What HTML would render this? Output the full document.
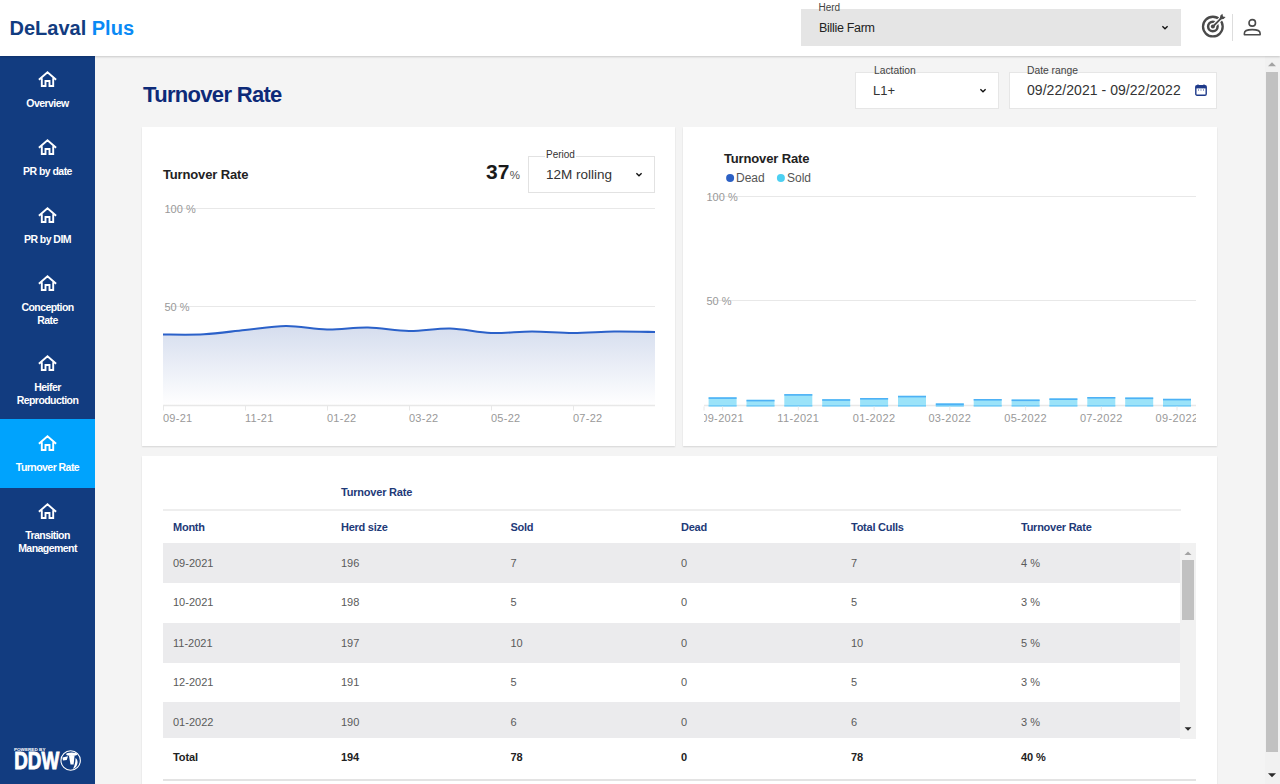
<!DOCTYPE html>
<html><head><meta charset="utf-8">
<style>
*{box-sizing:border-box;margin:0;padding:0}
html,body{width:1280px;height:784px;overflow:hidden;background:#f4f4f4;font-family:"Liberation Sans",sans-serif}
.abs{position:absolute}
#hdr{left:0;top:0;width:1280px;height:56px;background:#fff;box-shadow:0 1px 2px rgba(0,0,0,.18);z-index:5}
#logo{left:9.5px;top:16.6px;font-size:20px;font-weight:bold;color:#123c80;letter-spacing:0;white-space:nowrap}
#logo span{color:#0a8af5}
#side{left:0;top:56px;width:95px;height:728px;background:#123c80}
.it{position:absolute;left:0;width:95px;color:#fff;text-align:center;font-size:10.5px;font-weight:bold;line-height:12.2px}
.it svg{position:absolute;left:38px;top:15px}
.it .t{position:absolute;left:0;width:95px;top:41.3px;letter-spacing:-0.55px}
.act{background:#00a3fd}
.card{position:absolute;background:#fff;box-shadow:0 1px 1.5px rgba(0,0,0,0.13)}
.lbl{position:absolute;font-size:10px;color:#333;background:transparent;white-space:nowrap}
.txt{position:absolute;white-space:nowrap}
</style></head><body>
<div id="hdr" class="abs">
  <div id="logo" class="abs">DeLaval <span>Plus</span></div>
  <div class="abs" style="left:801px;top:9px;width:380px;height:37px;background:#e5e5e5"></div>
  <div class="lbl" style="left:818.5px;top:2px;font-size:10px;color:#444">Herd</div>
  <div class="txt" style="left:819px;top:21px;font-size:12.5px;color:#222;letter-spacing:-0.3px">Billie Farm</div>
  <svg class="abs" style="left:1160px;top:24px" width="10" height="7" viewBox="0 0 10 7"><path d="M2.4 2.2 L5 4.7 L7.6 2.2" stroke="#111" stroke-width="1.35" fill="none"/></svg>
  <svg class="abs" style="left:1200px;top:12px" width="27" height="27" viewBox="0 0 27 27">
    <circle cx="12.85" cy="14.6" r="9.85" stroke="#4a4a4a" stroke-width="2.3" fill="none"/>
    <circle cx="12.85" cy="14.6" r="4.75" stroke="#4a4a4a" stroke-width="2.5" fill="none"/>
    <path d="M12.85 14.6 L22 5.4" stroke="#fff" stroke-width="4.2" fill="none"/>
    <circle cx="12.85" cy="14.6" r="2" fill="#4a4a4a"/>
    <path d="M12.85 14.6 L21.5 5.9" stroke="#4a4a4a" stroke-width="1.9" fill="none"/>
    <path d="M19.6 7.4 L20.4 3.6 L22.4 1.7 L23 4.4 L25.6 4.9 L23.6 6.9 Z" fill="#4a4a4a"/>
  </svg>
  <div class="abs" style="left:1232px;top:14px;width:1px;height:27px;background:#ddd"></div>
  <svg class="abs" style="left:1242px;top:18px" width="20" height="19" viewBox="0 0 20 19">
    <circle cx="10.25" cy="4.9" r="3.25" stroke="#4a4a4a" stroke-width="1.6" fill="none"/>
    <path d="M2.4 16.7 V15.2 C2.4 12.6 6 11.6 10.25 11.6 C14.5 11.6 18.1 12.6 18.1 15.2 V16.7 Z" stroke="#4a4a4a" stroke-width="1.6" fill="none" stroke-linejoin="round"/>
  </svg>
</div>

<div id="side" class="abs">
  <div class="it" style="top:0;height:68px"><svg width="19" height="17" viewBox="0 0 19 17"><path d="M0.9 8.8 L9.5 1.3 L18.1 8.8 M3.8 7.3 V15 H7.5 V10 H11.5 V15 H15.2 V7.3" stroke="#fff" stroke-width="1.9" fill="none"/></svg><div class="t">Overview</div></div>
  <div class="it" style="top:68px;height:68px"><svg width="19" height="17" viewBox="0 0 19 17"><path d="M0.9 8.8 L9.5 1.3 L18.1 8.8 M3.8 7.3 V15 H7.5 V10 H11.5 V15 H15.2 V7.3" stroke="#fff" stroke-width="1.9" fill="none"/></svg><div class="t">PR by date</div></div>
  <div class="it" style="top:136px;height:68px"><svg width="19" height="17" viewBox="0 0 19 17"><path d="M0.9 8.8 L9.5 1.3 L18.1 8.8 M3.8 7.3 V15 H7.5 V10 H11.5 V15 H15.2 V7.3" stroke="#fff" stroke-width="1.9" fill="none"/></svg><div class="t">PR by DIM</div></div>
  <div class="it" style="top:204px;height:80px"><svg width="19" height="17" viewBox="0 0 19 17"><path d="M0.9 8.8 L9.5 1.3 L18.1 8.8 M3.8 7.3 V15 H7.5 V10 H11.5 V15 H15.2 V7.3" stroke="#fff" stroke-width="1.9" fill="none"/></svg><div class="t">Conception<br>Rate</div></div>
  <div class="it" style="top:284px;height:80px"><svg width="19" height="17" viewBox="0 0 19 17"><path d="M0.9 8.8 L9.5 1.3 L18.1 8.8 M3.8 7.3 V15 H7.5 V10 H11.5 V15 H15.2 V7.3" stroke="#fff" stroke-width="1.9" fill="none"/></svg><div class="t">Heifer<br>Reproduction</div></div>
  <div class="it act" style="top:363px;height:69px"><svg width="19" height="17" viewBox="0 0 19 17" style="top:16px"><path d="M0.9 8.8 L9.5 1.3 L18.1 8.8 M3.8 7.3 V15 H7.5 V10 H11.5 V15 H15.2 V7.3" stroke="#fff" stroke-width="1.9" fill="none"/></svg><div class="t" style="top:42.3px">Turnover Rate</div></div>
  <div class="it" style="top:432px;height:80px"><svg width="19" height="17" viewBox="0 0 19 17"><path d="M0.9 8.8 L9.5 1.3 L18.1 8.8 M3.8 7.3 V15 H7.5 V10 H11.5 V15 H15.2 V7.3" stroke="#fff" stroke-width="1.9" fill="none"/></svg><div class="t">Transition<br>Management</div></div>
  <svg style="position:absolute;left:0;top:684px" width="95" height="44" viewBox="0 740 95 44">
    <text x="13.9" y="751" font-family="Liberation Sans" font-weight="bold" font-size="4.2" fill="#fff" textLength="31.6" lengthAdjust="spacingAndGlyphs">POWERED BY</text>
    <text x="14.2" y="768.7" font-family="Liberation Sans" font-weight="bold" font-size="24.3" fill="#fff" stroke="#fff" stroke-width="0.9" textLength="45" lengthAdjust="spacingAndGlyphs">DDW</text>
    <circle cx="70.65" cy="760.5" r="9.7" fill="none" stroke="#fff" stroke-width="1.1"/>
    <ellipse cx="71.75" cy="754.3" rx="5.6" ry="1.7" fill="#fff"/>
    <path d="M62.4 757.5 L68 756.25 L66.75 760 L63 760.6 Z" fill="#fff"/>
    <path d="M68.9 755.4 L74.6 755.4 L73.6 764.4 L70.5 764.4 Z" fill="#fff"/>
    <path d="M75.5 758.1 C77.8 759.5 78.2 763 76.6 766 C75.7 767.6 74.5 768.4 73 768.75 C74.6 766 75.6 762 75.5 758.1 Z" fill="#fff"/>
  </svg>
</div>

<!-- page title -->
<div class="txt" style="left:143px;top:82px;font-size:22px;font-weight:bold;color:#0d2a78;letter-spacing:-0.68px">Turnover Rate</div>

<!-- lactation -->
<div class="abs" style="left:855px;top:72px;width:144px;height:37px;background:#fff;border:1px solid #e6e6e6"></div>
<div class="lbl" style="left:874px;top:64.5px;color:#444;font-size:10.3px">Lactation</div>
<div class="txt" style="left:873px;top:83px;font-size:13px;color:#333">L1+</div>
<svg class="abs" style="left:978px;top:87px" width="10" height="7" viewBox="0 0 10 7"><path d="M2.4 2.2 L5 4.7 L7.6 2.2" stroke="#111" stroke-width="1.35" fill="none"/></svg>
<!-- date range -->
<div class="abs" style="left:1009px;top:72px;width:208px;height:37px;background:#fff;border:1px solid #e6e6e6"></div>
<div class="lbl" style="left:1027px;top:64.5px;color:#444;font-size:10.3px">Date range</div>
<div class="txt" style="left:1027px;top:82px;font-size:14px;color:#333;letter-spacing:0.05px">09/22/2021 - 09/22/2022</div>
<svg class="abs" style="left:1195px;top:84px" width="12" height="12" viewBox="0 0 12 12"><path d="M3 0.5 V2.5 M9 0.5 V2.5" stroke="#1e3a8a" stroke-width="1.4"/><rect x="0.8" y="1.8" width="10.4" height="9.4" rx="1.2" fill="none" stroke="#1e3a8a" stroke-width="1.4"/><rect x="0.8" y="1.8" width="10.4" height="2.6" fill="#1e3a8a"/><path d="M3 6 h1 M5.5 6 h1 M8 6 h1" stroke="#1e3a8a" stroke-width="0.9"/></svg>

<!-- page scrollbar -->
<div class="abs" style="left:1265px;top:56px;width:15px;height:728px;background:#f1f1f1"></div>
<div class="abs" style="left:1266px;top:72px;width:12px;height:680px;background:#c1c1c1"></div>

<!-- card 1 -->
<div class="card" style="left:142px;top:127px;width:533px;height:319px"></div>
<!-- card 2 -->
<div class="card" style="left:683px;top:127px;width:534px;height:319px"></div>
<!-- table card -->
<div class="card" style="left:142px;top:455.5px;width:1075px;height:340px"></div>

<!-- CHARTS -->
<svg class="abs" style="left:0;top:0" width="1280" height="784" viewBox="0 0 1280 784">
<defs><linearGradient id="ag" x1="0" y1="0" x2="0" y2="1"><stop offset="0" stop-color="#d5ddee"/><stop offset="1" stop-color="#ffffff"/></linearGradient></defs>
<g stroke="#e8e8e8" stroke-width="1"><line x1="168" y1="208.5" x2="655" y2="208.5"/><line x1="168" y1="306.5" x2="655" y2="306.5"/></g>
<path d="M163.0 334.5 C169.8 334.5 190.3 335.1 204.0 334.3 C217.7 333.6 231.3 331.4 245.0 330.0 C258.7 328.6 272.3 326.1 286.0 326.0 C299.7 325.9 313.3 329.2 327.0 329.5 C340.7 329.8 354.3 327.2 368.0 327.5 C381.7 327.8 395.3 330.8 409.0 331.0 C422.7 331.2 436.3 328.2 450.0 328.5 C463.7 328.8 477.3 332.5 491.0 333.0 C504.7 333.5 518.3 331.5 532.0 331.5 C545.7 331.5 559.3 333.0 573.0 333.0 C586.7 333.0 600.3 331.7 614.0 331.5 C627.7 331.3 648.2 331.9 655.0 332.0 L655 405.5 L163 405.5 Z" fill="url(#ag)"/>
<path d="M163.0 334.5 C169.8 334.5 190.3 335.1 204.0 334.3 C217.7 333.6 231.3 331.4 245.0 330.0 C258.7 328.6 272.3 326.1 286.0 326.0 C299.7 325.9 313.3 329.2 327.0 329.5 C340.7 329.8 354.3 327.2 368.0 327.5 C381.7 327.8 395.3 330.8 409.0 331.0 C422.7 331.2 436.3 328.2 450.0 328.5 C463.7 328.8 477.3 332.5 491.0 333.0 C504.7 333.5 518.3 331.5 532.0 331.5 C545.7 331.5 559.3 333.0 573.0 333.0 C586.7 333.0 600.3 331.7 614.0 331.5 C627.7 331.3 648.2 331.9 655.0 332.0" fill="none" stroke="#2b61c9" stroke-width="2.1"/>
<line x1="163" y1="405.5" x2="655" y2="405.5" stroke="#e8e8e8" stroke-width="1.5"/>
<line x1="163.5" y1="406" x2="163.5" y2="410.5" stroke="#e8e8e8"/>
<line x1="245.5" y1="406" x2="245.5" y2="410.5" stroke="#e8e8e8"/>
<line x1="327.5" y1="406" x2="327.5" y2="410.5" stroke="#e8e8e8"/>
<line x1="409.5" y1="406" x2="409.5" y2="410.5" stroke="#e8e8e8"/>
<line x1="491.5" y1="406" x2="491.5" y2="410.5" stroke="#e8e8e8"/>
<line x1="573.5" y1="406" x2="573.5" y2="410.5" stroke="#e8e8e8"/>
<g font-family="Liberation Sans" font-size="11" fill="#999"><text x="164.5" y="213">100 %</text><text x="164.5" y="311">50 %</text></g><g font-family="Liberation Sans" font-size="11" fill="#999" letter-spacing="0.25">
<text x="163" y="422">09-21</text>
<text x="245" y="422">11-21</text>
<text x="327" y="422">01-22</text>
<text x="409" y="422">03-22</text>
<text x="491" y="422">05-22</text>
<text x="573" y="422">07-22</text>
</g>
<g stroke="#e8e8e8" stroke-width="1"><line x1="709" y1="196.5" x2="1196" y2="196.5"/><line x1="709" y1="300.5" x2="1196" y2="300.5"/></g>
<line x1="704" y1="405.5" x2="1196" y2="405.5" stroke="#e8e8e8" stroke-width="1.5"/>
<rect x="708.6" y="397.3" width="28" height="9.2" fill="#9be3f9"/><rect x="708.6" y="397.3" width="28" height="1.6" fill="#4db1f5"/><rect x="708.6" y="405.2" width="28" height="1.2" fill="#6cc6f7"/>
<rect x="746.5" y="399.8" width="28" height="6.7" fill="#9be3f9"/><rect x="746.5" y="399.8" width="28" height="1.6" fill="#4db1f5"/><rect x="746.5" y="405.2" width="28" height="1.2" fill="#6cc6f7"/>
<rect x="784.3" y="394.1" width="28" height="12.4" fill="#9be3f9"/><rect x="784.3" y="394.1" width="28" height="1.6" fill="#4db1f5"/><rect x="784.3" y="405.2" width="28" height="1.2" fill="#6cc6f7"/>
<rect x="822.2" y="399.2" width="28" height="7.3" fill="#9be3f9"/><rect x="822.2" y="399.2" width="28" height="1.6" fill="#4db1f5"/><rect x="822.2" y="405.2" width="28" height="1.2" fill="#6cc6f7"/>
<rect x="860.1" y="398.0" width="28" height="8.5" fill="#9be3f9"/><rect x="860.1" y="398.0" width="28" height="1.6" fill="#4db1f5"/><rect x="860.1" y="405.2" width="28" height="1.2" fill="#6cc6f7"/>
<rect x="898.0" y="395.8" width="28" height="10.7" fill="#9be3f9"/><rect x="898.0" y="395.8" width="28" height="1.6" fill="#4db1f5"/><rect x="898.0" y="405.2" width="28" height="1.2" fill="#6cc6f7"/>
<rect x="935.8" y="403.4" width="28" height="3.1" fill="#9be3f9"/><rect x="935.8" y="403.4" width="28" height="1.6" fill="#4db1f5"/><rect x="935.8" y="405.2" width="28" height="1.2" fill="#6cc6f7"/>
<rect x="973.7" y="399.0" width="28" height="7.5" fill="#9be3f9"/><rect x="973.7" y="399.0" width="28" height="1.6" fill="#4db1f5"/><rect x="973.7" y="405.2" width="28" height="1.2" fill="#6cc6f7"/>
<rect x="1011.6" y="399.5" width="28" height="7.0" fill="#9be3f9"/><rect x="1011.6" y="399.5" width="28" height="1.6" fill="#4db1f5"/><rect x="1011.6" y="405.2" width="28" height="1.2" fill="#6cc6f7"/>
<rect x="1049.4" y="398.4" width="28" height="8.1" fill="#9be3f9"/><rect x="1049.4" y="398.4" width="28" height="1.6" fill="#4db1f5"/><rect x="1049.4" y="405.2" width="28" height="1.2" fill="#6cc6f7"/>
<rect x="1087.3" y="397.0" width="28" height="9.5" fill="#9be3f9"/><rect x="1087.3" y="397.0" width="28" height="1.6" fill="#4db1f5"/><rect x="1087.3" y="405.2" width="28" height="1.2" fill="#6cc6f7"/>
<rect x="1125.2" y="397.5" width="28" height="9.0" fill="#9be3f9"/><rect x="1125.2" y="397.5" width="28" height="1.6" fill="#4db1f5"/><rect x="1125.2" y="405.2" width="28" height="1.2" fill="#6cc6f7"/>
<rect x="1163.0" y="398.8" width="28" height="7.7" fill="#9be3f9"/><rect x="1163.0" y="398.8" width="28" height="1.6" fill="#4db1f5"/><rect x="1163.0" y="405.2" width="28" height="1.2" fill="#6cc6f7"/>
<line x1="704.0" y1="406.5" x2="704.0" y2="410.5" stroke="#e8e8e8"/>
<line x1="722.6" y1="406.5" x2="722.6" y2="410.5" stroke="#e8e8e8"/>
<line x1="798.3" y1="406.5" x2="798.3" y2="410.5" stroke="#e8e8e8"/>
<line x1="874.1" y1="406.5" x2="874.1" y2="410.5" stroke="#e8e8e8"/>
<line x1="949.8" y1="406.5" x2="949.8" y2="410.5" stroke="#e8e8e8"/>
<line x1="1025.6" y1="406.5" x2="1025.6" y2="410.5" stroke="#e8e8e8"/>
<line x1="1101.3" y1="406.5" x2="1101.3" y2="410.5" stroke="#e8e8e8"/>
<line x1="1177.0" y1="406.5" x2="1177.0" y2="410.5" stroke="#e8e8e8"/>
<g font-family="Liberation Sans" font-size="11" fill="#999"><text x="706.5" y="304.5">50 %</text><text x="706.5" y="200.5">100 %</text>
<svg x="704" y="405" width="492" height="25" overflow="hidden"><g letter-spacing="0.35">
<text x="18.6" y="17" text-anchor="middle">09-2021</text>
<text x="94.3" y="17" text-anchor="middle">11-2021</text>
<text x="170.1" y="17" text-anchor="middle">01-2022</text>
<text x="245.8" y="17" text-anchor="middle">03-2022</text>
<text x="321.6" y="17" text-anchor="middle">05-2022</text>
<text x="397.3" y="17" text-anchor="middle">07-2022</text>
<text x="473.0" y="17" text-anchor="middle">09-2022</text>
</g></svg></g>
<circle cx="730.1" cy="178" r="4" fill="#2c60c4"/><circle cx="780.9" cy="178" r="4" fill="#4dd0f2"/>
<path d="M1268 66.2 L1272 62.2 L1276 66.2 Z" fill="#a3a3a3"/><path d="M1268 773.3 L1272 777.3 L1276 773.3 Z" fill="#2a2a2a"/>
</svg>
<div class="txt" style="left:163px;top:167px;font-size:13px;font-weight:bold;color:#222;letter-spacing:-0.15px">Turnover Rate</div>
<div class="txt" style="left:486px;top:160px;font-size:21px;font-weight:bold;color:#1a1a1a">37<span style="font-size:11.5px;font-weight:normal;color:#555;margin-left:0.5px">%</span></div>
<div class="abs" style="left:528px;top:156px;width:127px;height:37px;border:1px solid #e2e2e2;background:#fff"></div>
<div class="lbl" style="left:545px;top:149px;background:#fff;padding:0 1px;color:#333">Period</div>
<div class="txt" style="left:546px;top:167px;font-size:13.5px;color:#333">12M rolling</div>
<svg class="abs" style="left:634px;top:171px" width="10" height="7" viewBox="0 0 10 7"><path d="M2.4 2.2 L5 4.7 L7.6 2.2" stroke="#111" stroke-width="1.35" fill="none"/></svg>
<div class="txt" style="left:724px;top:151px;font-size:13px;font-weight:bold;color:#222;letter-spacing:-0.15px">Turnover Rate</div>
<div class="txt" style="left:736px;top:171px;font-size:12px;color:#555">Dead</div>
<div class="txt" style="left:787px;top:171px;font-size:12px;color:#555">Sold</div>
<div class="txt" style="left:341px;top:486px;font-size:11px;font-weight:bold;color:#1e3a78;letter-spacing:-0.2px">Turnover Rate</div>
<div class="abs" style="left:163px;top:509px;width:1018px;height:2px;background:#eeeeee"></div>
<div class="txt" style="left:173px;top:521px;font-size:11px;font-weight:bold;color:#1e3a78;letter-spacing:-0.25px">Month</div>
<div class="txt" style="left:341px;top:521px;font-size:11px;font-weight:bold;color:#1e3a78;letter-spacing:-0.25px">Herd size</div>
<div class="txt" style="left:510.5px;top:521px;font-size:11px;font-weight:bold;color:#1e3a78;letter-spacing:-0.25px">Sold</div>
<div class="txt" style="left:681px;top:521px;font-size:11px;font-weight:bold;color:#1e3a78;letter-spacing:-0.25px">Dead</div>
<div class="txt" style="left:851px;top:521px;font-size:11px;font-weight:bold;color:#1e3a78;letter-spacing:-0.25px">Total Culls</div>
<div class="txt" style="left:1021px;top:521px;font-size:11px;font-weight:bold;color:#1e3a78;letter-spacing:-0.25px">Turnover Rate</div>
<div class="abs" style="left:163px;top:542.8px;width:1017px;height:40.4px;background:#ebebed"></div>
<div class="txt" style="left:173px;top:556.1px;font-size:11px;color:#5a5a5a;line-height:14px">09-2021</div>
<div class="txt" style="left:341px;top:556.1px;font-size:11px;color:#5a5a5a;line-height:14px">196</div>
<div class="txt" style="left:510.5px;top:556.1px;font-size:11px;color:#5a5a5a;line-height:14px">7</div>
<div class="txt" style="left:681px;top:556.1px;font-size:11px;color:#5a5a5a;line-height:14px">0</div>
<div class="txt" style="left:851px;top:556.1px;font-size:11px;color:#5a5a5a;line-height:14px">7</div>
<div class="txt" style="left:1021px;top:556.1px;font-size:11px;color:#5a5a5a;line-height:14px">4 %</div>
<div class="txt" style="left:173px;top:595.3px;font-size:11px;color:#5a5a5a;line-height:14px">10-2021</div>
<div class="txt" style="left:341px;top:595.3px;font-size:11px;color:#5a5a5a;line-height:14px">198</div>
<div class="txt" style="left:510.5px;top:595.3px;font-size:11px;color:#5a5a5a;line-height:14px">5</div>
<div class="txt" style="left:681px;top:595.3px;font-size:11px;color:#5a5a5a;line-height:14px">0</div>
<div class="txt" style="left:851px;top:595.3px;font-size:11px;color:#5a5a5a;line-height:14px">5</div>
<div class="txt" style="left:1021px;top:595.3px;font-size:11px;color:#5a5a5a;line-height:14px">3 %</div>
<div class="abs" style="left:163px;top:622.6px;width:1017px;height:40.6px;background:#ebebed"></div>
<div class="txt" style="left:173px;top:635.7px;font-size:11px;color:#5a5a5a;line-height:14px">11-2021</div>
<div class="txt" style="left:341px;top:635.7px;font-size:11px;color:#5a5a5a;line-height:14px">197</div>
<div class="txt" style="left:510.5px;top:635.7px;font-size:11px;color:#5a5a5a;line-height:14px">10</div>
<div class="txt" style="left:681px;top:635.7px;font-size:11px;color:#5a5a5a;line-height:14px">0</div>
<div class="txt" style="left:851px;top:635.7px;font-size:11px;color:#5a5a5a;line-height:14px">10</div>
<div class="txt" style="left:1021px;top:635.7px;font-size:11px;color:#5a5a5a;line-height:14px">5 %</div>
<div class="txt" style="left:173px;top:675.1px;font-size:11px;color:#5a5a5a;line-height:14px">12-2021</div>
<div class="txt" style="left:341px;top:675.1px;font-size:11px;color:#5a5a5a;line-height:14px">191</div>
<div class="txt" style="left:510.5px;top:675.1px;font-size:11px;color:#5a5a5a;line-height:14px">5</div>
<div class="txt" style="left:681px;top:675.1px;font-size:11px;color:#5a5a5a;line-height:14px">0</div>
<div class="txt" style="left:851px;top:675.1px;font-size:11px;color:#5a5a5a;line-height:14px">5</div>
<div class="txt" style="left:1021px;top:675.1px;font-size:11px;color:#5a5a5a;line-height:14px">3 %</div>
<div class="abs" style="left:163px;top:702.2px;width:1017px;height:36.3px;background:#ebebed"></div>
<div class="txt" style="left:173px;top:714.7px;font-size:11px;color:#5a5a5a;line-height:14px">01-2022</div>
<div class="txt" style="left:341px;top:714.7px;font-size:11px;color:#5a5a5a;line-height:14px">190</div>
<div class="txt" style="left:510.5px;top:714.7px;font-size:11px;color:#5a5a5a;line-height:14px">6</div>
<div class="txt" style="left:681px;top:714.7px;font-size:11px;color:#5a5a5a;line-height:14px">0</div>
<div class="txt" style="left:851px;top:714.7px;font-size:11px;color:#5a5a5a;line-height:14px">6</div>
<div class="txt" style="left:1021px;top:714.7px;font-size:11px;color:#5a5a5a;line-height:14px">3 %</div>
<div class="abs" style="left:1180px;top:543px;width:16px;height:195.5px;background:#f1f1f1"></div>
<div class="abs" style="left:1182px;top:560px;width:12px;height:60px;background:#c1c1c1"></div>
<svg class="abs" style="left:1180px;top:546px" width="16" height="192"><path d="M4.5 9 L8 5.5 L11.5 9 Z" fill="#a3a3a3"/><path d="M4.6 181.3 L8 184.8 L11.4 181.3 Z" fill="#2a2a2a"/></svg>
<div class="txt" style="left:173px;top:750px;font-size:11px;font-weight:bold;color:#222;line-height:14px;letter-spacing:-0.1px">Total</div>
<div class="txt" style="left:341px;top:750px;font-size:11px;font-weight:bold;color:#222;line-height:14px;letter-spacing:-0.1px">194</div>
<div class="txt" style="left:510.5px;top:750px;font-size:11px;font-weight:bold;color:#222;line-height:14px;letter-spacing:-0.1px">78</div>
<div class="txt" style="left:681px;top:750px;font-size:11px;font-weight:bold;color:#222;line-height:14px;letter-spacing:-0.1px">0</div>
<div class="txt" style="left:851px;top:750px;font-size:11px;font-weight:bold;color:#222;line-height:14px;letter-spacing:-0.1px">78</div>
<div class="txt" style="left:1021px;top:750px;font-size:11px;font-weight:bold;color:#222;line-height:14px;letter-spacing:-0.1px">40 %</div>
<div class="abs" style="left:163px;top:778.5px;width:1033px;height:2px;background:#e3e3e3"></div>
</body></html>
